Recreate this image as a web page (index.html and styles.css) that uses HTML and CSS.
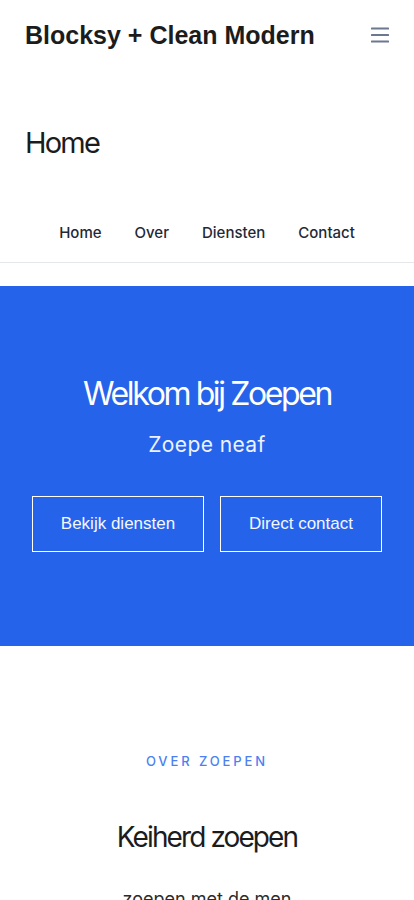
FILE: index.html
```html
<!DOCTYPE html>
<html lang="nl">
<head>
<meta charset="utf-8">
<meta name="viewport" content="width=device-width, initial-scale=1">
<title>Home – Blocksy + Clean Modern</title>
<link rel="stylesheet" href="styles.css">
</head>
<body>
<header class="site-header">
  <a class="logo" href="#">Blocksy + Clean Modern</a>
  <button class="menu-toggle" aria-label="Menu">
    <svg width="18" height="16" viewBox="0 0 18 16"><rect x="0" y="0.5" width="18" height="2" rx="0.5"/><rect x="0" y="7" width="18" height="2" rx="0.5"/><rect x="0" y="13.5" width="18" height="2" rx="0.5"/></svg>
  </button>
</header>
<div class="page-title">
  <h1>Home</h1>
</div>
<nav class="main-nav">
  <a href="#">Home</a>
  <a href="#">Over</a>
  <a href="#">Diensten</a>
  <a href="#">Contact</a>
</nav>
<section class="hero">
  <h2 class="hero-title">Welkom bij Zoepen</h2>
  <p class="hero-sub">Zoepe neaf</p>
  <div class="hero-buttons">
    <a class="btn btn-wide" href="#">Bekijk diensten</a>
    <a class="btn" href="#">Direct contact</a>
  </div>
</section>
<section class="about">
  <p class="eyebrow">OVER ZOEPEN</p>
  <h2 class="about-title">Keiherd zoepen</h2>
  <p class="about-text">zoepen met de men</p>
</section>
</body>
</html>
```
FILE: styles.css
```css
* { box-sizing: border-box; }
html, body { margin: 0; padding: 0; }
body {
  background: #fff;
  color: #1a1a1a;
  font-family: Inter, "Liberation Sans", sans-serif;
}
a { text-decoration: none; color: inherit; }

.site-header {
  display: flex;
  align-items: center;
  justify-content: space-between;
  height: 70px;
  padding: 0 25px;
}
.logo {
  font-family: "Liberation Sans", Arial, sans-serif;
  font-weight: 700;
  font-size: 25px;
  color: #1c1c1c;
}
.menu-toggle {
  background: none;
  border: 0;
  padding: 0;
  display: flex;
  fill: #6b7890;
}

.page-title {
  height: 146px;
  padding: 53px 25px 0;
}
.page-title h1 {
  margin: 0;
  font-weight: 400;
  font-size: 29px;
  letter-spacing: -1.8px;
  line-height: 40px;
  color: #1c1c1c;
}

.main-nav {
  display: flex;
  justify-content: center;
  align-items: flex-start;
  gap: 33px;
  height: 47px;
  border-bottom: 1px solid #e5e7eb;
}
.main-nav a {
  font-size: 15px;
  font-weight: 500;
  line-height: 34px;
  color: #1f2937;
}

.hero {
  margin-top: 23px;
  background: #2563eb;
  color: #fff;
  height: 360px;
  padding-top: 86px;
  text-align: center;
}
.hero-title {
  margin: 0;
  font-weight: 400;
  font-size: 32px;
  letter-spacing: -2.4px;
  line-height: 44px;
}
.hero-sub {
  margin: 14px 0 0;
  font-size: 21px;
  letter-spacing: 0.4px;
  line-height: 30px;
  color: #eef2ff;
}
.hero-buttons {
  display: flex;
  justify-content: center;
  gap: 16px;
  margin-top: 36px;
}
.btn {
  display: flex;
  align-items: center;
  justify-content: center;
  width: 162px;
  height: 56px;
  border: 1px solid #fff;
  font-family: "Liberation Sans", Arial, sans-serif;
  font-size: 17px;
  color: #f5f7ff;
}
.btn-wide { width: 172px; }

.about {
  text-align: center;
  padding-top: 105px;
}
.eyebrow {
  margin: 0;
  font-size: 13px;
  font-weight: 500;
  letter-spacing: 2.9px;
  color: #4b7ff2;
  line-height: 20px;
}
.about-title {
  margin: 46px 0 0;
  font-weight: 400;
  font-size: 28px;
  letter-spacing: -1.9px;
  line-height: 40px;
  color: #1c1c1c;
}
.about-text {
  margin: 28px 0 0;
  font-size: 18px;
  line-height: 28px;
  color: #2b2b2b;
}
```
